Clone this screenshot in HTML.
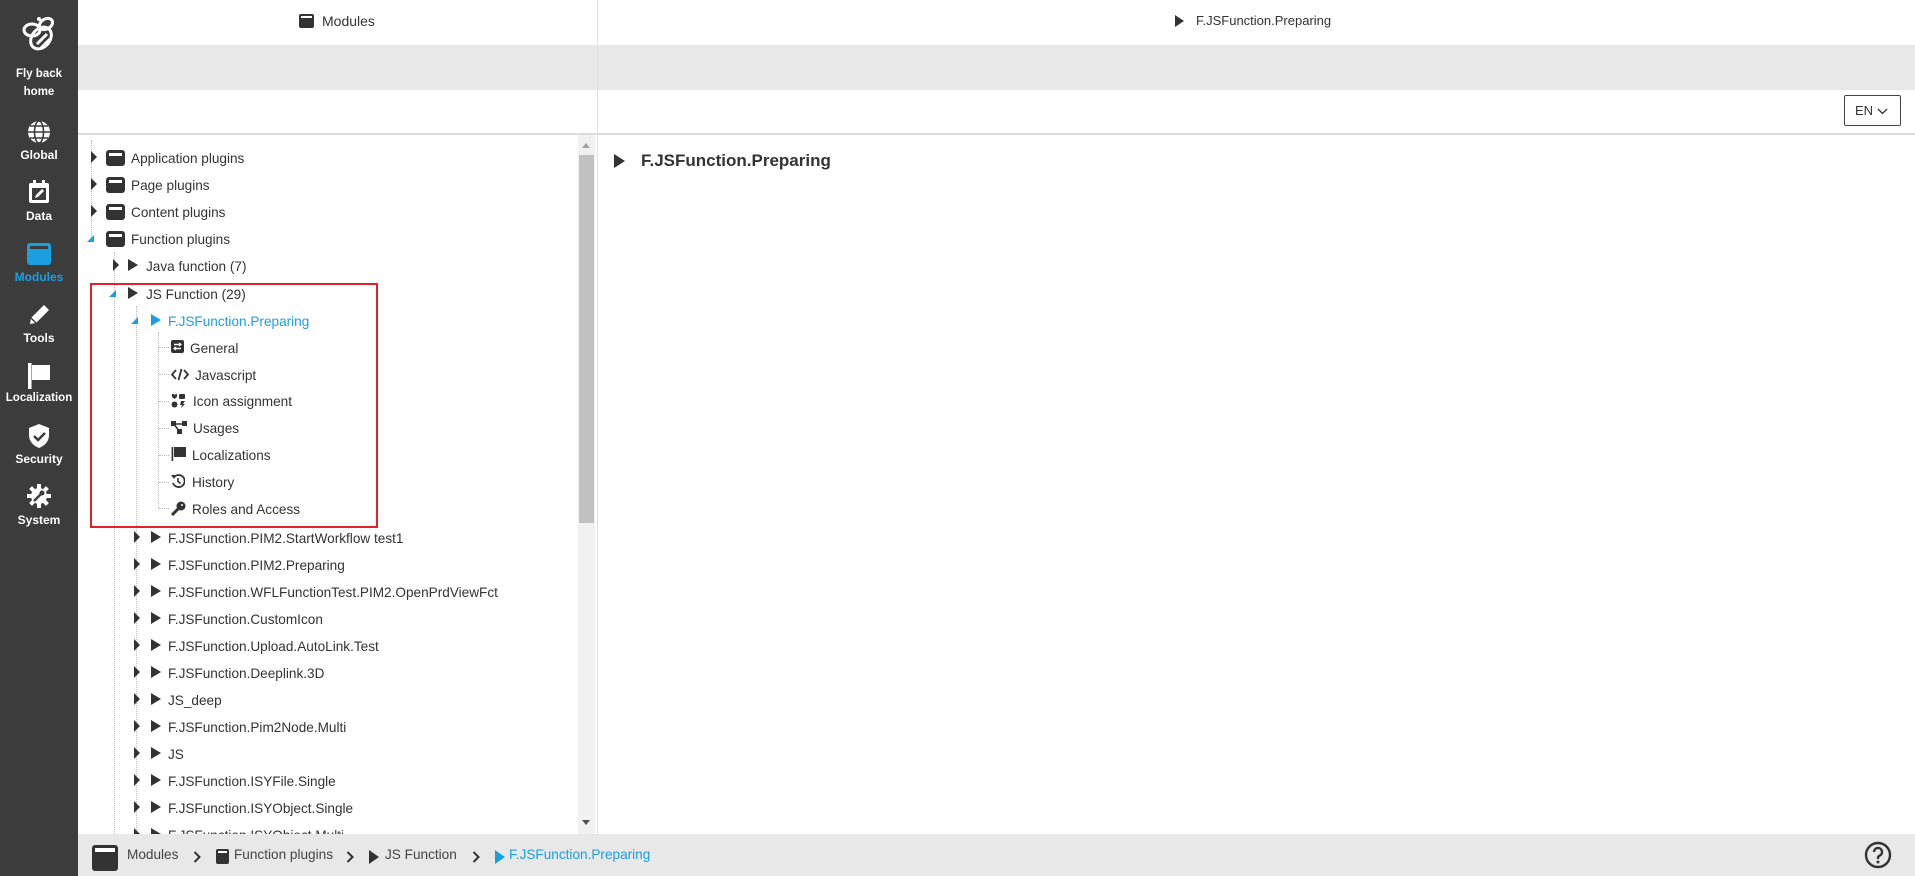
<!DOCTYPE html>
<html><head><meta charset="utf-8">
<style>
*{margin:0;padding:0;box-sizing:border-box}
body{width:1915px;height:876px;overflow:hidden;background:#fff;font-family:"Liberation Sans",Arial,sans-serif;color:#333;position:relative}
.abs{position:absolute}
#side{left:0;top:0;width:78px;height:876px;background:#3c3c3c}
.si{position:absolute;left:0;width:78px;text-align:center;color:#fff;font-size:12px;font-weight:bold}
.si svg{display:block;margin:0 auto}
.row{position:absolute;height:27px;line-height:27px;font-size:13.6px;white-space:nowrap;color:#333}
.exp{position:absolute;width:0;height:0;border-top:6px solid transparent;border-bottom:6px solid transparent;border-left:6px solid #333}
.open{position:absolute;width:0;height:0;border-left:7px solid transparent;border-bottom:7px solid #1a9fe0}
.tri{position:absolute;width:0;height:0;border-top:6px solid transparent;border-bottom:6px solid transparent;border-left:10px solid #333}
.fold{position:absolute;width:19px;height:16px;background:#333;border-radius:3px}
.fold:after{content:"";position:absolute;left:3px;right:3px;top:3px;height:3px;background:#fff}
.vl{position:absolute;border-left:1px dotted #bbb}
.hl{position:absolute;border-top:1px dotted #bbb;width:10px}
</style></head><body>

<div id="side" class="abs">
  <div class="si" style="top:14px"><svg width="40" height="42" viewBox="0 0 40 42"><g fill="none" stroke="#fff" stroke-width="3"><ellipse cx="22" cy="24" rx="9" ry="12" transform="rotate(40 22 24)"/><ellipse cx="13" cy="16" rx="8" ry="6"/><ellipse cx="27" cy="10" rx="7" ry="5" transform="rotate(-30 27 10)"/><path d="M18 30l10-10M22 34l9-9"/></g><circle cx="20" cy="5" r="2" fill="#fff"/></svg></div>
  <div class="si" style="top:65px;line-height:18px;font-size:11.5px">Fly back<br>home</div>
  <div class="si" style="top:120px"><svg width="24" height="24" viewBox="0 0 24 24"><circle cx="12" cy="12" r="11" fill="#fff"/><g stroke="#3c3c3c" stroke-width="1.6" fill="none"><ellipse cx="12" cy="12" rx="4.5" ry="11"/><path d="M1 12h22M3 6h18M3 18h18"/></g></svg></div>
  <div class="si" style="top:148px">Global</div>
  <div class="si" style="top:180px"><svg width="22" height="24" viewBox="0 0 22 24"><rect x="1" y="3" width="20" height="20" rx="2" fill="#fff"/><rect x="4" y="8" width="14" height="12" fill="#3c3c3c"/><rect x="5" y="0" width="3" height="5" fill="#fff"/><rect x="14" y="0" width="3" height="5" fill="#fff"/><path d="M7 18l1-3 6-6 2 2-6 6z" fill="#fff"/></svg></div>
  <div class="si" style="top:209px">Data</div>
  <div class="si" style="top:243px"><svg width="24" height="22" viewBox="0 0 24 22"><rect x="0" y="0" width="24" height="22" rx="3" fill="#1a9fe0"/><rect x="3" y="3" width="18" height="3" fill="#3c3c3c"/></svg></div>
  <div class="si" style="top:270px;color:#1a9fe0">Modules</div>
  <div class="si" style="top:303px"><svg width="24" height="24" viewBox="0 0 24 24"><path d="M3 21l1-6L17 2l5 5L9 20z" fill="#fff"/><path d="M4 15l5 5" stroke="#3c3c3c" stroke-width="1.5"/></svg></div>
  <div class="si" style="top:331px">Tools</div>
  <div class="si" style="top:363px"><svg width="24" height="26" viewBox="0 0 24 26"><rect x="1" y="0" width="3" height="26" fill="#fff"/><path d="M4 2h19v15H4z" fill="#fff"/><rect x="4" y="0" width="1" height="26" fill="#e8a020"/></svg></div>
  <div class="si" style="top:392px;font-size:11.5px">Localization</div>
  <div class="si" style="top:424px"><svg width="22" height="24" viewBox="0 0 22 24"><path d="M11 0l10 4v7c0 7-5 11-10 13C6 22 1 18 1 11V4z" fill="#fff"/><path d="M6 12l4 4 7-7" stroke="#3c3c3c" stroke-width="2.5" fill="none"/></svg></div>
  <div class="si" style="top:452px">Security</div>
  <div class="si" style="top:484px"><svg width="24" height="24" viewBox="0 0 24 24"><circle cx="12" cy="12" r="8" fill="#fff"/><g fill="#fff"><rect x="10" y="0" width="4" height="5"/><rect x="10" y="19" width="4" height="5"/><rect x="0" y="10" width="5" height="4"/><rect x="19" y="10" width="5" height="4"/><rect x="3" y="3" width="4" height="4" transform="rotate(45 5 5)"/><rect x="17" y="17" width="4" height="4" transform="rotate(45 19 19)"/><rect x="17" y="3" width="4" height="4" transform="rotate(45 19 5)"/><rect x="3" y="17" width="4" height="4" transform="rotate(45 5 19)"/></g><path d="M7 17l7-7" stroke="#3c3c3c" stroke-width="2.5"/><circle cx="15" cy="9" r="2.5" fill="#3c3c3c"/></svg></div>
  <div class="si" style="top:513px">System</div>
</div>

<!-- headers -->
<div class="abs" style="left:78px;top:45px;width:1837px;height:45px;background:#e8e8e8"></div>
<div class="abs" style="left:597px;top:0;width:1px;height:834px;background:#e2e2e2"></div>
<div class="abs" style="left:78px;top:133px;width:1837px;height:2px;background:#dcdcdc"></div>
<div class="abs" style="left:299px;top:14px;width:15px;height:14px;background:#333;border-radius:2px"></div>
<div class="abs" style="left:301px;top:16px;width:11px;height:2px;background:#fff"></div>
<div class="abs" style="left:322px;top:13px;font-size:14px">Modules</div>
<div class="tri" style="left:1175px;top:15px;border-left-width:9px"></div>
<div class="abs" style="left:1196px;top:13px;font-size:13px">F.JSFunction.Preparing</div>
<div class="abs" style="left:1844px;top:95px;width:57px;height:31px;border:1px solid #444;border-radius:2px;font-size:13px;line-height:29px;padding-left:10px">EN <svg width="11" height="7" viewBox="0 0 11 7" style="vertical-align:middle"><path d="M1 1l4.5 4.5L10 1" stroke="#333" fill="none" stroke-width="1.3"/></svg></div>

<!-- right content -->
<div class="tri" style="left:614px;top:154px;border-top-width:7px;border-bottom-width:7px;border-left-width:11px"></div>
<div class="abs" style="left:641px;top:151px;font-size:17px;font-weight:bold;color:#333">F.JSFunction.Preparing</div>

<!-- scrollbar -->
<div class="abs" style="left:578px;top:135px;width:17px;height:699px;background:#f1f1f1"></div>
<div class="abs" style="left:579px;top:155px;width:15px;height:368px;background:#c1c1c1"></div>
<div class="abs" style="left:582px;top:143px;border-left:4px solid transparent;border-right:4px solid transparent;border-bottom:5px solid #a3a3a3"></div>
<div class="abs" style="left:582px;top:820px;border-left:4px solid transparent;border-right:4px solid transparent;border-top:5px solid #505050"></div>

<!-- tree lines -->
<div class="vl" style="left:91px;top:140px;height:100px"></div>
<div class="vl" style="left:114px;top:252px;height:582px"></div>
<div class="vl" style="left:136px;top:306px;height:528px"></div>
<div class="vl" style="left:158px;top:332px;height:176px"></div>
<div class="hl" style="left:159px;top:347px"></div><div class="hl" style="left:159px;top:374px"></div><div class="hl" style="left:159px;top:401px"></div><div class="hl" style="left:159px;top:428px"></div><div class="hl" style="left:159px;top:455px"></div><div class="hl" style="left:159px;top:482px"></div><div class="hl" style="left:159px;top:508px"></div>

<!-- level1 -->
<div class="exp" style="left:91px;top:151px"></div><div class="fold" style="left:106px;top:150px"></div><div class="row" style="left:131px;top:145px">Application plugins</div>
<div class="exp" style="left:91px;top:178px"></div><div class="fold" style="left:106px;top:177px"></div><div class="row" style="left:131px;top:172px">Page plugins</div>
<div class="exp" style="left:91px;top:205px"></div><div class="fold" style="left:106px;top:204px"></div><div class="row" style="left:131px;top:199px">Content plugins</div>
<div class="open" style="left:87px;top:235px"></div><div class="fold" style="left:106px;top:231px"></div><div class="row" style="left:131px;top:226px">Function plugins</div>
<!-- level2 -->
<div class="exp" style="left:113px;top:259px"></div><div class="tri" style="left:128px;top:259px"></div><div class="row" style="left:146px;top:253px">Java function (7)</div>
<div class="open" style="left:109px;top:290px"></div><div class="tri" style="left:128px;top:287px"></div><div class="row" style="left:146px;top:281px">JS Function (29)</div>
<!-- level3 open -->
<div class="open" style="left:131px;top:317px"></div><div class="tri" style="left:151px;top:314px;border-left-color:#1a9fe0"></div><div class="row" style="left:168px;top:308px;color:#1a9fe0">F.JSFunction.Preparing</div>
<!-- level4 -->
<svg class="abs" style="left:171px;top:340px" width="13" height="13" viewBox="0 0 13 13"><rect width="13" height="13" rx="2" fill="#333"/><path d="M3 4.5h7M3 8.5h7" stroke="#fff" stroke-width="1.5"/><path d="M8 3l2 1.5L8 6M5 7l-2 1.5L5 10" stroke="#fff" fill="none" stroke-width="1.2"/></svg><div class="row" style="left:190px;top:335px">General</div>
<svg class="abs" style="left:171px;top:368px" width="18" height="13" viewBox="0 0 18 13"><path d="M5 2L1 6.5 5 11M13 2l4 4.5L13 11M10.5 1L7.5 12" stroke="#333" stroke-width="1.8" fill="none"/></svg><div class="row" style="left:195px;top:362px">Javascript</div>
<svg class="abs" style="left:171px;top:393px" width="15" height="15" viewBox="0 0 15 15"><g fill="#333"><path d="M1 1h2l1 1 1-1h1v3L3.5 6 1 4z"/><rect x="8" y="1" width="6" height="5" rx="1"/><circle cx="3.5" cy="11.5" r="3"/><path d="M10 8l4 0-2 3h2l-4 4 1-3h-2z"/></g></svg><div class="row" style="left:193px;top:388px">Icon assignment</div>
<svg class="abs" style="left:171px;top:421px" width="16" height="13" viewBox="0 0 16 13"><g fill="#333"><rect x="0" y="0" width="5" height="5"/><rect x="11" y="0" width="5" height="5"/><rect x="6" y="8" width="5" height="5"/></g><path d="M3 3h10M3 3l5 7" stroke="#333" stroke-width="1.6"/></svg><div class="row" style="left:193px;top:415px">Usages</div>
<svg class="abs" style="left:171px;top:447px" width="15" height="14" viewBox="0 0 15 14"><rect x="0" y="0" width="2" height="14" fill="#e8a020"/><rect x="1" y="0" width="1.2" height="14" fill="#333"/><path d="M3 0h12v10H3z" fill="#333"/></svg><div class="row" style="left:192px;top:442px">Localizations</div>
<svg class="abs" style="left:171px;top:474px" width="14" height="14" viewBox="0 0 14 14"><path d="M2.5 4A6 6 0 1 1 2 9" stroke="#333" stroke-width="1.8" fill="none"/><path d="M0 1l4 0-1 4z" fill="#333"/><path d="M7 4v3.5l2.5 2" stroke="#333" stroke-width="1.6" fill="none"/></svg><div class="row" style="left:192px;top:469px">History</div>
<svg class="abs" style="left:171px;top:501px" width="15" height="15" viewBox="0 0 15 15"><circle cx="10" cy="5" r="4.5" fill="#333"/><path d="M7 8L1 14" stroke="#333" stroke-width="3"/><circle cx="11" cy="4" r="1" fill="#fff"/></svg><div class="row" style="left:192px;top:496px">Roles and Access</div>

<!-- red box -->
<div class="abs" style="left:90px;top:283px;width:288px;height:245px;border:2px solid #e4212b"></div>

<!-- level3 collapsed -->
<div class="exp" style="left:134px;top:531px"></div><div class="tri" style="left:151px;top:531px"></div><div class="row" style="left:168px;top:525px">F.JSFunction.PIM2.StartWorkflow test1</div>
<div class="exp" style="left:134px;top:558px"></div><div class="tri" style="left:151px;top:558px"></div><div class="row" style="left:168px;top:552px">F.JSFunction.PIM2.Preparing</div>
<div class="exp" style="left:134px;top:585px"></div><div class="tri" style="left:151px;top:585px"></div><div class="row" style="left:168px;top:579px">F.JSFunction.WFLFunctionTest.PIM2.OpenPrdViewFct</div>
<div class="exp" style="left:134px;top:612px"></div><div class="tri" style="left:151px;top:612px"></div><div class="row" style="left:168px;top:606px">F.JSFunction.CustomIcon</div>
<div class="exp" style="left:134px;top:639px"></div><div class="tri" style="left:151px;top:639px"></div><div class="row" style="left:168px;top:633px">F.JSFunction.Upload.AutoLink.Test</div>
<div class="exp" style="left:134px;top:666px"></div><div class="tri" style="left:151px;top:666px"></div><div class="row" style="left:168px;top:660px">F.JSFunction.Deeplink.3D</div>
<div class="exp" style="left:134px;top:693px"></div><div class="tri" style="left:151px;top:693px"></div><div class="row" style="left:168px;top:687px">JS_deep</div>
<div class="exp" style="left:134px;top:720px"></div><div class="tri" style="left:151px;top:720px"></div><div class="row" style="left:168px;top:714px">F.JSFunction.Pim2Node.Multi</div>
<div class="exp" style="left:134px;top:747px"></div><div class="tri" style="left:151px;top:747px"></div><div class="row" style="left:168px;top:741px">JS</div>
<div class="exp" style="left:134px;top:774px"></div><div class="tri" style="left:151px;top:774px"></div><div class="row" style="left:168px;top:768px">F.JSFunction.ISYFile.Single</div>
<div class="exp" style="left:134px;top:801px"></div><div class="tri" style="left:151px;top:801px"></div><div class="row" style="left:168px;top:795px">F.JSFunction.ISYObject.Single</div>
<div class="exp" style="left:134px;top:828px"></div><div class="tri" style="left:151px;top:828px"></div><div class="row" style="left:168px;top:822px">F.JSFunction.ISYObject.Multi</div>

<!-- breadcrumb -->
<div class="abs" style="left:78px;top:834px;width:1837px;height:42px;background:#e8e8e8"></div>
<div class="abs" style="left:92px;top:845px;width:26px;height:26px;background:#333;border-radius:3px"></div>
<div class="abs" style="left:95px;top:848px;width:20px;height:4px;background:#fff"></div>
<div class="abs" style="left:127px;top:847px;font-size:13.6px;color:#444">Modules</div>
<svg class="abs" style="left:193px;top:851px" width="8" height="12" viewBox="0 0 8 12"><path d="M1.5 1l5 5-5 5" stroke="#333" stroke-width="2" fill="none"/></svg>
<div class="abs" style="left:216px;top:849px;width:13px;height:15px;background:#333;border-radius:2px"></div>
<div class="abs" style="left:218px;top:851px;width:9px;height:2px;background:#fff"></div>
<div class="abs" style="left:234px;top:847px;font-size:13.6px;color:#444">Function plugins</div>
<svg class="abs" style="left:346px;top:851px" width="8" height="12" viewBox="0 0 8 12"><path d="M1.5 1l5 5-5 5" stroke="#333" stroke-width="2" fill="none"/></svg>
<div class="tri" style="left:369px;top:850px;border-top-width:7px;border-bottom-width:7px;border-left-width:10px"></div>
<div class="abs" style="left:385px;top:847px;font-size:13.6px;color:#444">JS Function</div>
<svg class="abs" style="left:472px;top:851px" width="8" height="12" viewBox="0 0 8 12"><path d="M1.5 1l5 5-5 5" stroke="#333" stroke-width="2" fill="none"/></svg>
<div class="tri" style="left:495px;top:850px;border-top-width:7px;border-bottom-width:7px;border-left-width:10px;border-left-color:#1a9fe0"></div>
<div class="abs" style="left:509px;top:847px;font-size:13.6px;color:#1a9fe0">F.JSFunction.Preparing</div>
<svg class="abs" style="left:1864px;top:841px" width="28" height="28" viewBox="0 0 28 28"><circle cx="14" cy="14" r="12" stroke="#333" stroke-width="2.4" fill="none"/><path d="M10 11a4 4 0 1 1 5.5 3.7c-1 .5-1.5 1.2-1.5 2.3v1" stroke="#333" stroke-width="2.4" fill="none"/><circle cx="14" cy="21" r="1.5" fill="#333"/></svg>
</body></html>
